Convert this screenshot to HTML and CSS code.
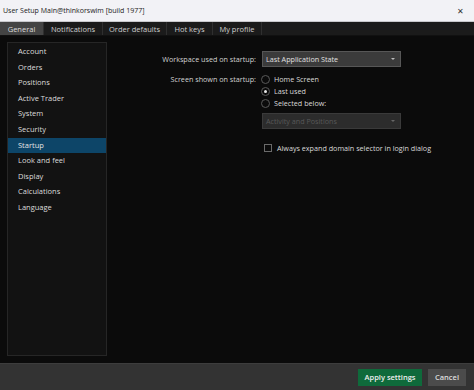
FILE: index.html
```html
<!DOCTYPE html>
<html lang="en">
<head>
  <meta charset="UTF-8" />
  <title>User Setup</title>
  <link rel="stylesheet" href="styles.css">
</head>
<body>
  <div class="titlebar">
    <span class="title">User Setup Main@thinkorswim [build 1977]</span>
    <span class="close">&#x2715;</span>
  </div>

  <div class="tabs">
    <div class="tab active">General</div>
    <div class="tab">Notifications</div>
    <div class="tab">Order defaults</div>
    <div class="tab">Hot keys</div>
    <div class="tab">My profile</div>
  </div>

  <div class="main">
    <ul class="sidebar">
      <li>Account</li>
      <li>Orders</li>
      <li>Positions</li>
      <li>Active Trader</li>
      <li>System</li>
      <li>Security</li>
      <li class="selected">Startup</li>
      <li>Look and feel</li>
      <li>Display</li>
      <li>Calculations</li>
      <li>Language</li>
    </ul>

    <div class="settings">
      <div class="row">
        <div class="label">Workspace used on startup:</div>
        <div class="select">
          <span>Last Application State</span>
          <span class="arrow"></span>
        </div>
      </div>

      <div class="row radios-row">
        <div class="label">Screen shown on startup:</div>
        <div class="radios">
          <label class="radio"><span class="dot"></span>Home Screen</label>
          <label class="radio"><span class="dot checked"></span>Last used</label>
          <label class="radio"><span class="dot"></span>Selected below:</label>
        </div>
      </div>

      <div class="row">
        <div class="label"></div>
        <div class="select disabled">
          <span>Activity and Positions</span>
          <span class="arrow"></span>
        </div>
      </div>

      <div class="row check-row">
        <div class="label"></div>
        <label class="check"><span class="box"></span>Always expand domain selector in login dialog</label>
      </div>
    </div>
  </div>

  <div class="footer">
    <button class="btn apply">Apply settings</button>
    <button class="btn cancel">Cancel</button>
  </div>
</body>
</html>
```

FILE: styles.css
```css
/* === Base === */
* { margin: 0; padding: 0; box-sizing: border-box; }
body {
  width: 474px;
  height: 390px;
  overflow: hidden;
  font-family: 'Open Sans', 'Noto Sans', sans-serif;
  font-size: 7.5px;
  background: #0b0b0b;
  color: #d8d8d8;
  display: flex;
  flex-direction: column;
}

.titlebar {
  height: 22px;
  background: #f2f2f6;
  border-bottom: 1px solid #c8c8cc;
  display: flex;
  align-items: center;
  justify-content: space-between;
  padding: 0 10px 0 3px;
  color: #222;
  font-size: 7px;
}

.close {
  font-size: 8px;
  color: #333;
}

.tabs {
  height: 14px;
  background: #1b1b1b;
  display: flex;
  border-bottom: 1px solid #111;
}

.tab {
  display: flex;
  align-items: center;
  justify-content: center;
  color: #cfcfcf;
  border-right: 1px solid #2f2f2f;
  height: 100%;
}

.tab:nth-child(1) { width: 44px; }
.tab:nth-child(2) { width: 59px; }
.tab:nth-child(3) { width: 64px; }
.tab:nth-child(4) { width: 46px; }
.tab:nth-child(5) { width: 49px; }

.tab.active {
  background: #444;
  color: #ddd;
}

.main {
  flex: 1;
  display: flex;
  padding: 6px 0 7px 7px;
  background: #0b0b0b;
}

.sidebar {
  list-style: none;
  width: 100px;
  background: #121212;
  border: 1px solid #262626;
  padding-top: 1px;
}

.sidebar li {
  height: 15.6px;
  line-height: 15.6px;
  padding-left: 10px;
  color: #dcdcdc;
}

.sidebar li.selected {
  background: #0d4568;
  color: #e4e4e4;
}

.settings {
  flex: 1;
  padding-top: 9px;
  display: flex;
  flex-direction: column;
  font-size: 7.2px;
}

.row {
  display: flex;
  align-items: center;
}

.label {
  width: 149px;
  text-align: right;
  color: #d2d2d2;
  flex-shrink: 0;
}

.select {
  margin-left: 6px;
  width: 139px;
  height: 16px;
  background: #3b3b3b;
  border: 1px solid #575757;
  display: flex;
  align-items: center;
  justify-content: space-between;
  padding: 0 5px 0 3px;
  color: #e0e0e0;
}

.select .arrow {
  width: 0;
  height: 0;
  border-left: 2.5px solid transparent;
  border-right: 2.5px solid transparent;
  border-top: 2.5px solid #bbb;
}

.select.disabled {
  background: #2c2c2c;
  border-color: #3a3a3a;
  color: #585858;
}

.select.disabled .arrow { border-top-color: #666; }

.radios-row {
  align-items: flex-start;
  margin-top: 6px;
  margin-bottom: 4px;
}

.radios-row .label { line-height: 12px; }

.radios {
  margin-left: 5px;
  display: flex;
  flex-direction: column;
}

.radio {
  height: 12px;
  display: flex;
  align-items: center;
  color: #dadada;
}

.dot {
  width: 9px;
  height: 9px;
  border-radius: 50%;
  border: 1px solid #5a5a5a;
  background: #0b0b0b;
  margin-right: 4px;
  position: relative;
}

.dot.checked::after {
  content: '';
  position: absolute;
  left: 2px;
  top: 2px;
  width: 3px;
  height: 3px;
  border-radius: 50%;
  background: #e8e8e8;
}

.check-row { margin-top: 14px; }

.check {
  margin-left: 8px;
  display: flex;
  align-items: center;
  color: #dadada;
}

.box {
  width: 8px;
  height: 8px;
  border: 1px solid #6a6a6a;
  margin-right: 5px;
}

.footer {
  height: 27px;
  background: #333;
  border-top: 1px solid #3d3d3d;
  display: flex;
  justify-content: flex-end;
  align-items: center;
  gap: 6px;
  padding-right: 8px;
}

.btn {
  font-family: 'Open Sans', 'Noto Sans', sans-serif;
  font-size: 7.5px;
  font-weight: 600;
  border: none;
  height: 17px;
  color: #eee;
}

.btn.apply {
  width: 64px;
  background: #0f6a3b;
}

.btn.cancel {
  width: 38px;
  background: #4b4b4b;
  color: #ddd;
}
```
